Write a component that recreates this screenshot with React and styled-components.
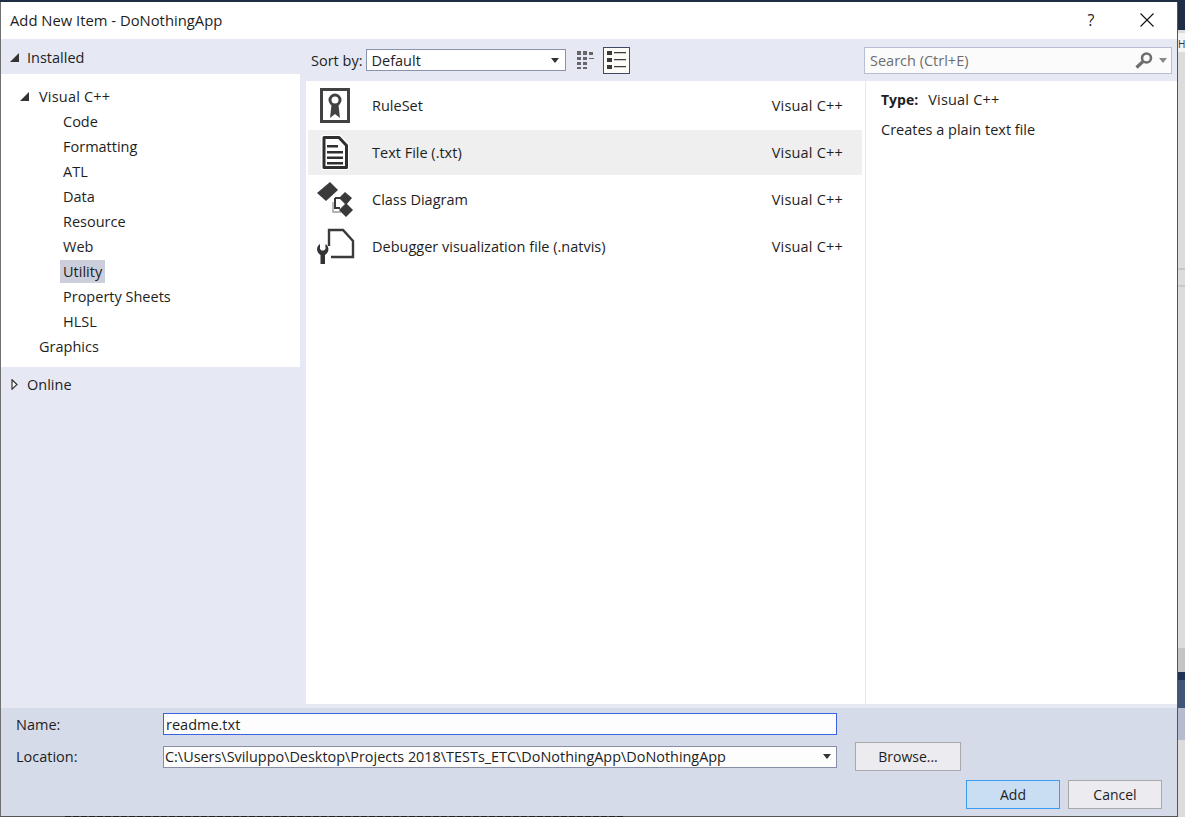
import React from 'react'
import styled, { createGlobalStyle } from 'styled-components'

const Global = createGlobalStyle`
html, body { margin:0; padding:0; width:1185px; height:817px; overflow:hidden; background:#dcdcdc; }
* { box-sizing:border-box; }
svg { display:block; }
`

const Page = styled.div`
position:relative;
width:1185px;
height:817px;
background:#dcdcdc;
padding-top:2px;
font-family:"Open Sans","Noto Sans",sans-serif;
font-size:14.5px;
color:#1e1e1e;
`

// what can be seen of the editor behind the dialog
const Behind = styled.div`
position:absolute;
left:0;
right:0;
top:${({top})=>top}px;
height:${({h})=>h}px;
background:${({bg})=>bg};
`

const BehindText = styled.div`
position:absolute;
left:1178px;
top:37px;
font-size:10px;
color:#333;
white-space:nowrap;
`

const BehindDashes = styled.div`
position:absolute;
left:65px;
top:816px;
width:560px;
height:1px;
background:repeating-linear-gradient(90deg,#222 0 6px,transparent 6px 8px);
`

const Dialog = styled.div`
position:relative;
width:1178px;
height:815px;
display:flex;
flex-direction:column;
background:#e6e9f4;
border-left:1px solid #707070;
border-right:1px solid #555;
border-bottom:1px solid #555;
`

const TitleBar = styled.div`
height:37px;
flex:none;
background:#fff;
display:flex;
align-items:center;
padding:0 9px 2px 9px;
`

const Title = styled.div`
flex:1;
font-size:14.8px;
`

const Help = styled.div`
width:46px;
text-align:center;
font-size:16px;
margin-right:10px;
`

const Close = styled.div`
width:46px;
height:30px;
display:flex;
align-items:center;
justify-content:center;
margin-right:-2px;
`

const Body = styled.div`
flex:1;
display:flex;
min-height:0;
`

const Sidebar = styled.div`
width:305px;
flex:none;
`

const Group = styled.div`
height:${({h})=>h}px;
display:flex;
align-items:center;
gap:8px;
padding:${({down})=>down?2:0}px 0 0 9px;
`

const Tree = styled.div`
background:#fff;
width:299px;
padding:10px 0;
height:293px;
`

const TreeRow = styled.div`
height:25px;
display:flex;
align-items:center;
gap:7px;
padding-left:${({depth})=>depth===0?19:59}px;
`

const Spacer = styled.span`
width:9px;
flex:none;
`

const Label = styled.span`
padding:2px 3px;
background:${({selected})=>selected?'#cccedb':'transparent'};
`

const Lang = styled.span`
letter-spacing:.2px;
`

const Main = styled.div`
flex:1;
display:flex;
flex-direction:column;
min-width:0;
`

const Toolbar = styled.div`
height:42px;
flex:none;
display:flex;
align-items:center;
padding:0 5px;
`

const SortLabel = styled.span`
margin-right:4px;
`

const SortSelect = styled.div`
width:200px;
height:22px;
background:#fff;
border:1px solid #8a93ac;
display:flex;
align-items:center;
justify-content:space-between;
padding:0 6px 0 4px;
margin-right:6px;
`

const ViewButton = styled.div`
width:${({active})=>active?27:26}px;
height:27px;
display:flex;
align-items:center;
justify-content:center;
margin-right:5px;
background:${({active})=>active?'#fdfbf6':'transparent'};
border:1px solid ${({active})=>active?'#3f4a66':'transparent'};
`

const SearchBox = styled.div`
width:308px;
height:27px;
margin-left:auto;
background:#fbfbfc;
border:1px solid #b8bfd2;
display:flex;
align-items:center;
justify-content:space-between;
padding:1px 4px 0 5px;
color:#6d6d6d;
`

const SearchIcons = styled.div`
display:flex;
align-items:center;
gap:6px;
`

const Content = styled.div`
flex:1;
display:flex;
background:#fff;
min-height:0;
`

const List = styled.div`
width:559px;
flex:none;
padding:2px 3px 0 2px;
`

const Item = styled.div`
height:45px;
margin-bottom:2px;
display:flex;
align-items:center;
background:${({active})=>active?'#efefef':'transparent'};
`

const ItemIcon = styled.div`
width:64px;
flex:none;
display:flex;
justify-content:center;
padding-right:10px;
`

const ItemName = styled.span`
flex:1;
`

const ItemLang = styled(Lang)`
margin-right:19px;
`

const Info = styled.div`
flex:1;
border-left:1px solid #e6e9f4;
padding:9px 15px;
`

const InfoType = styled.div`
display:flex;
gap:10px;
margin-bottom:11px;
`

const Strong = styled.b`
font-weight:700;
font-size:14px;
`

const Footer = styled.div`
height:108px;
margin-top:4px;
flex:none;
background:#d6dbe9;
padding:5px 15px 0 15px;
display:flex;
flex-direction:column;
`

const FormRow = styled.div`
display:flex;
align-items:center;
margin-bottom:${({gap})=>gap}px;
`

const FieldLabel = styled.span`
width:147px;
flex:none;
`

const NameInput = styled.div`
width:674px;
height:22px;
background:#fdfdfd;
border:1px solid #3b62e0;
display:flex;
align-items:center;
padding-left:2px;
`

const LocationInput = styled.div`
width:674px;
height:22px;
background:#fdfdfd;
border:1px solid #878ea6;
display:flex;
align-items:center;
justify-content:space-between;
padding:0 5px 0 1px;
white-space:nowrap;
font-size:14.42px;
`

const Button = styled.div`
width:${({w})=>w}px;
height:29px;
display:flex;
align-items:center;
justify-content:center;
font-size:14px;
background:${({primary})=>primary?'#c9ddf3':'#ecebf0'};
border:1px solid ${({primary})=>primary?'#3b9bf0':'#a9a9a9'};
`

const BrowseButton = styled(Button)`
margin-left:18px;
`

const Actions = styled.div`
display:flex;
justify-content:flex-end;
gap:8px;
`

const Arrow = ({ color }) => (
  <svg width="8" height="5" viewBox="0 0 8 5"><path d="M0 0h8L4 5z" fill={color} /></svg>
)

const Expanded = () => (
  <svg width="9" height="9" viewBox="0 0 9 9"><path d="M9 0v9H0z" fill="#333" /></svg>
)

const Collapsed = () => (
  <svg width="9" height="11" viewBox="0 0 9 11"><path d="M2 .8l5 4.700-5 4.700z" fill="#fff" stroke="#333" strokeWidth="1.200" /></svg>
)

const GridViewIcon = () => (
  <svg width="17" height="18" viewBox="0 0 17 18" fill="#666">
    <path d="M0 0h4v4H0zM6 0h4v4H6zM12 1h4v3h-4zM0 6h4v3H0zM6 6h4v3H6zM12 7h5v1h-5zM0 11h4v3H0zM6 11h4v3H6zM0 16h4v2H0zM6 16h4v2H6z" />
  </svg>
)

const ListViewIcon = () => (
  <svg width="19" height="19" viewBox="0 0 19 19" fill="#3a3a3a">
    <path d="M0 0h5v4H0zM7 1h12v1.200H7zM0 7h5v4H0zM7 8h12v1.200H7zM0 14h5v4H0zM7 15h12v1.200H7z" />
  </svg>
)

const SearchGlass = () => (
  <svg width="18" height="17" viewBox="0 0 18 17">
    <circle cx="11.500" cy="6" r="4.500" fill="none" stroke="#6e6e6e" strokeWidth="2.600" />
    <path d="M8 9.500l-6.500 6" stroke="#6e6e6e" strokeWidth="3.200" />
  </svg>
)

const RuleSetIcon = () => (
  <svg width="30" height="35" viewBox="0 0 30 35">
    <rect x="1.500" y="1.500" width="27" height="32" fill="#fff" stroke="#424242" strokeWidth="3" />
    <path d="M11.500 17l-1.500 13 5-4 5 4-1.500-13z" fill="#424242" />
    <circle cx="15" cy="12" r="5" fill="#fff" stroke="#424242" strokeWidth="3" />
  </svg>
)

const TextFileIcon = () => (
  <svg width="28" height="35" viewBox="0 0 28 35">
    <path d="M3 2.500h15l7.500 8v22H3z" fill="#fff" stroke="#fff" strokeWidth="6" strokeLinejoin="round" />
    <path d="M3 2.500h15l7.500 8v22H3z" fill="#fff" stroke="#2f2f2f" strokeWidth="3" strokeLinejoin="round" />
    <path d="M6 10h11v2.400H6zM6 16h16v2.400H6zM6 21.500h16v2.400H6zM6 27h16v2.400H6z" fill="#2f2f2f" />
  </svg>
)

const ClassDiagramIcon = () => (
  <svg width="40" height="40" viewBox="0 0 40 40">
    <path d="M18 22v10h8" fill="none" stroke="#9a9a9a" strokeWidth="1.300" />
    <path d="M2 13L15 2l8 8-12 11z" fill="#3a3a3a" />
    <path d="M20 18v10h5M20 18h5" fill="none" stroke="#3a3a3a" strokeWidth="2" />
    <path d="M24 18l6-6 7 6-6 7z" fill="#3a3a3a" />
    <path d="M24 30l7-7 7 7-7 7z" fill="#3a3a3a" />
  </svg>
)

const NatvisIcon = () => (
  <svg width="40" height="40" viewBox="0 0 40 40">
    <path d="M14 19V3h14l10 11v16H16" fill="#fff" stroke="#3a3a3a" strokeWidth="2.400" />
    <path d="M5 17c-3.500 2-4.500 8 .5 11v9H10v-9c5-3 4-9 .5-11v5L9 23.500H6.500L5 22z" fill="#333" />
  </svg>
)

const CloseIcon = () => (
  <svg width="14" height="14" viewBox="0 0 14 14"><path d="M.5.5l13 13M13.500.5l-13 13" stroke="#111" strokeWidth="1.100" /></svg>
)

const treeItems = ['Code', 'Formatting', 'ATL', 'Data', 'Resource', 'Web', 'Utility', 'Property Sheets', 'HLSL']

const items = [
  { name: 'RuleSet', icon: <RuleSetIcon /> },
  { name: 'Text File (.txt)', icon: <TextFileIcon />, active: true },
  { name: 'Class Diagram', icon: <ClassDiagramIcon /> },
  { name: 'Debugger visualization file (.natvis)', icon: <NatvisIcon /> },
]

export default function App() {
  return (
    <Page>
      <Global />
      <Behind top={0} h={30} bg="#1f2d45" />
      <Behind top={33} h={19} bg="#f4f4f4" />
      <Behind top={268} h={2} bg="#c8c8c8" />
      <Behind top={285} h={2} bg="#c8c8c8" />
      <Behind top={648} h={24} bg="#c4c4c4" />
      <Behind top={672} h={8} bg="#1f3358" />
      <Behind top={680} h={28} bg="#41557a" />
      <Behind top={708} h={32} bg="#b6bccd" />
      <BehindText>H</BehindText>
      <Dialog>
        <TitleBar>
          <Title>Add New Item - DoNothingApp</Title>
          <Help>?</Help>
          <Close><CloseIcon /></Close>
        </TitleBar>
        <Body>
          <Sidebar>
            <Group h={35} down><Expanded />Installed</Group>
            <Tree>
              <TreeRow depth={0}><Expanded /><Label><Lang>Visual C++</Lang></Label></TreeRow>
              {treeItems.map((t) => (
                <TreeRow depth={1} key={t}><Label selected={t === 'Utility'}>{t}</Label></TreeRow>
              ))}
              <TreeRow depth={0}><Spacer /><Label>Graphics</Label></TreeRow>
            </Tree>
            <Group h={34}><Collapsed />Online</Group>
          </Sidebar>
          <Main>
            <Toolbar>
              <SortLabel>Sort by:</SortLabel>
              <SortSelect>Default<Arrow color="#333" /></SortSelect>
              <ViewButton><GridViewIcon /></ViewButton>
              <ViewButton active><ListViewIcon /></ViewButton>
              <SearchBox>
                Search (Ctrl+E)
                <SearchIcons><SearchGlass /><Arrow color="#888" /></SearchIcons>
              </SearchBox>
            </Toolbar>
            <Content>
              <List>
                {items.map((i) => (
                  <Item key={i.name} active={i.active}>
                    <ItemIcon>{i.icon}</ItemIcon>
                    <ItemName>{i.name}</ItemName>
                    <ItemLang>Visual C++</ItemLang>
                  </Item>
                ))}
              </List>
              <Info>
                <InfoType><Strong>Type:</Strong><Lang>Visual C++</Lang></InfoType>
                Creates a plain text file
              </Info>
            </Content>
          </Main>
        </Body>
        <Footer>
          <FormRow gap={7}>
            <FieldLabel>Name:</FieldLabel>
            <NameInput>readme.txt</NameInput>
          </FormRow>
          <FormRow gap={9}>
            <FieldLabel>Location:</FieldLabel>
            <LocationInput>C:\Users\Sviluppo\Desktop\Projects 2018\TESTs_ETC\DoNothingApp\DoNothingApp<Arrow color="#333" /></LocationInput>
            <BrowseButton w={106}>Browse...</BrowseButton>
          </FormRow>
          <Actions>
            <Button primary w={94}>Add</Button>
            <Button w={94}>Cancel</Button>
          </Actions>
        </Footer>
      </Dialog>
      <BehindDashes />
    </Page>
  )
}
